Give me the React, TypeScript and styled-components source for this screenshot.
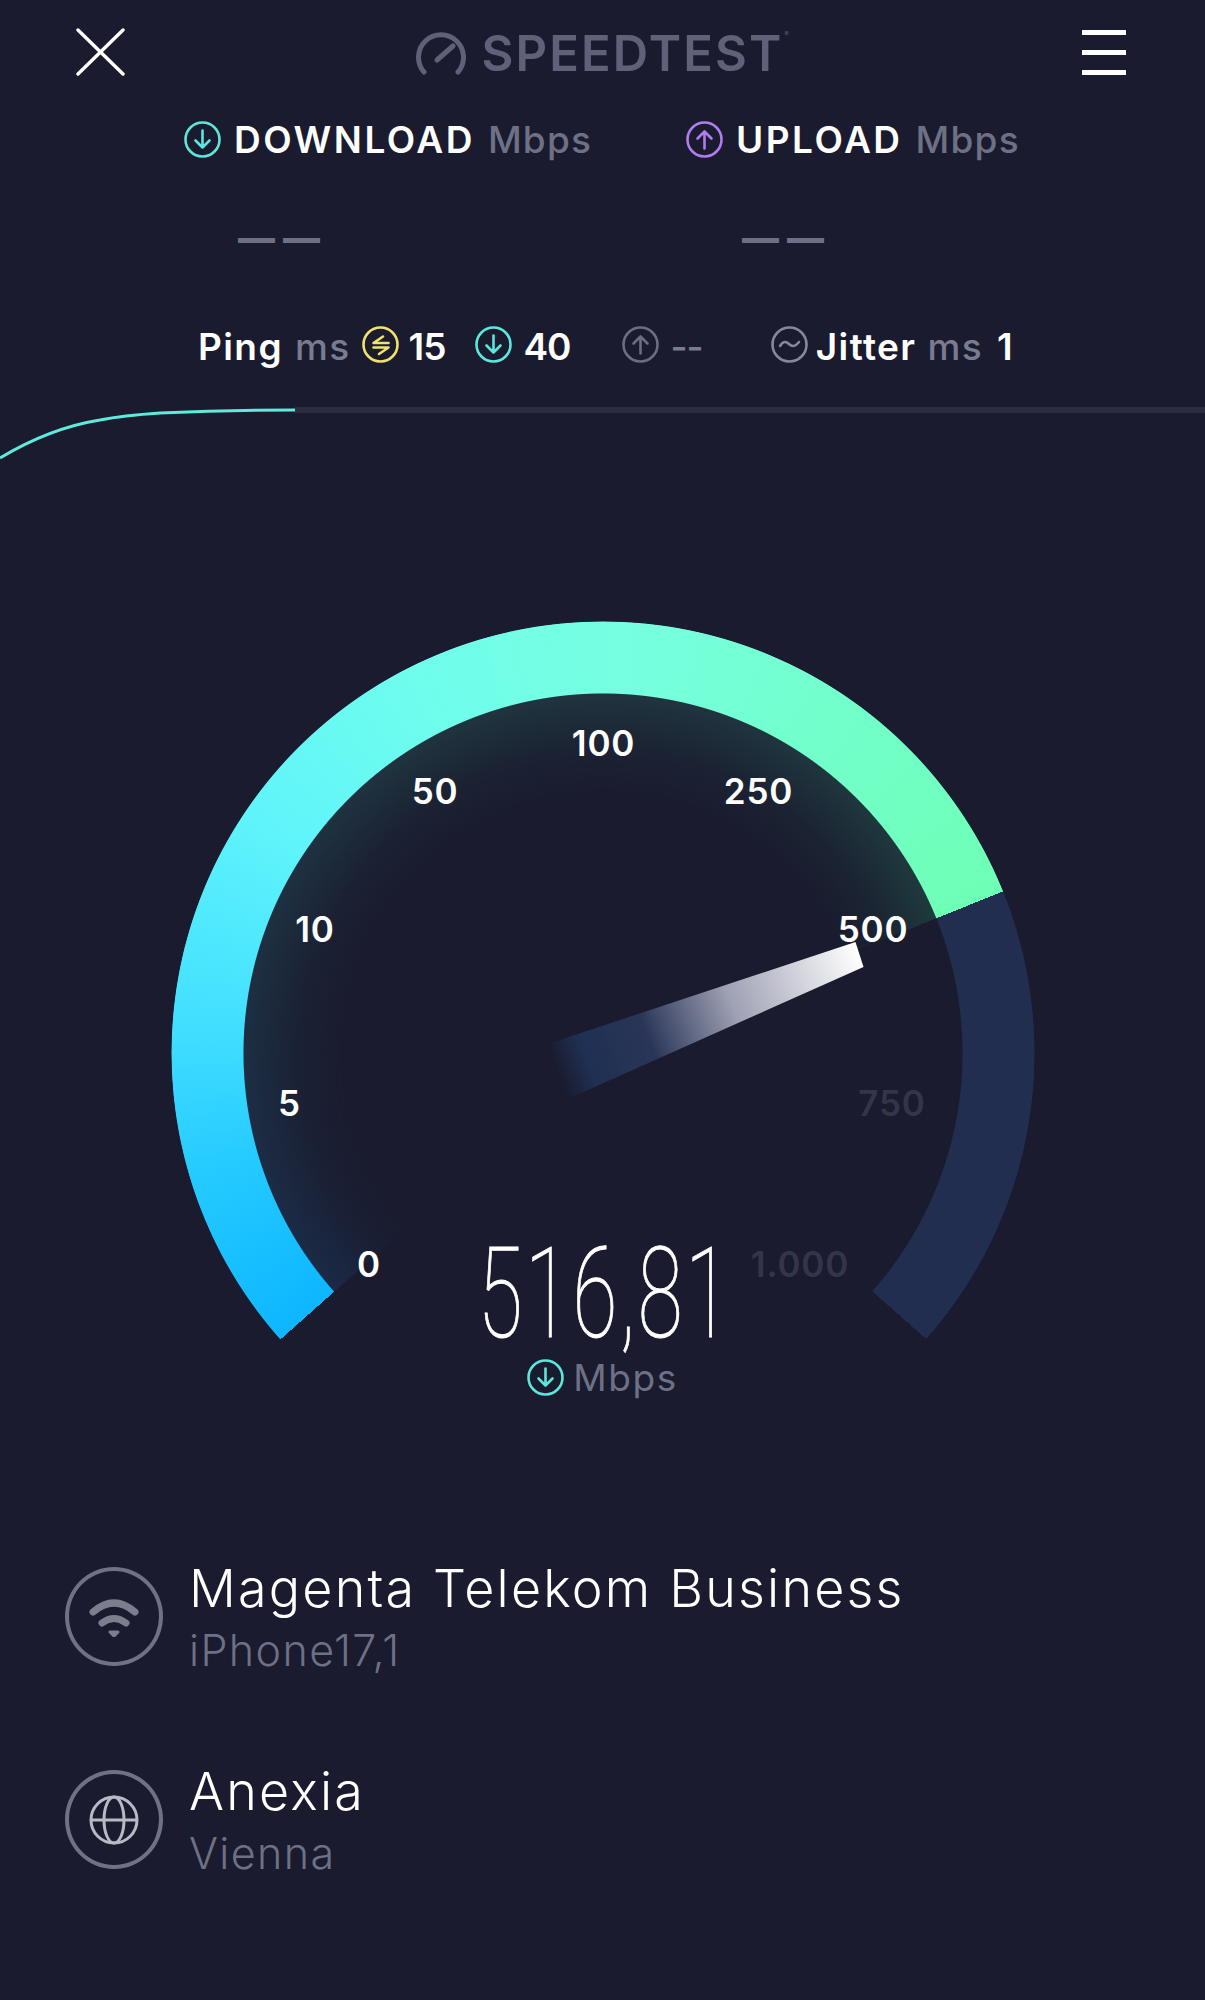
import { FC, ReactNode } from 'react'
import styled, { createGlobalStyle } from 'styled-components'

const GlobalStyle = createGlobalStyle`
  html, body {
    margin: 0;
    padding: 0;
    background: #1a1b2e;
  }
  * {
    box-sizing: border-box;
  }
`

const Page = styled.div`
  width: 1205px;
  min-height: 2000px;
  background: #1a1b2e;
  color: #fff;
  font-family: Inter, 'Liberation Sans', sans-serif;
  overflow: hidden;
`

const Header = styled.header`
  height: 104px;
  padding: 0 79px 0 76px;
  display: flex;
  align-items: center;
  justify-content: space-between;
`

const Logo = styled.div`
  display: flex;
  align-items: center;
  gap: 16px;
  color: #5f6178;
  font-size: 49px;
  font-weight: 600;
  letter-spacing: 2.1px;
  line-height: 1;
  margin: 2px 3px 0 0;
  & > sup {
    font-size: 6px;
    font-weight: 400;
    letter-spacing: 0;
    align-self: flex-start;
    margin: 2px 0 0 -15px;
  }
`

const Burger = styled.div`
  width: 44px;
  display: flex;
  flex-direction: column;
  gap: 15px;
  & > span {
    display: block;
    height: 5px;
    background: #fff;
  }
`

const MetricRow = styled.div`
  height: 72px;
  padding: 0 0 2px 184px;
  display: grid;
  grid-template-columns: 502px 502px;
  align-items: center;
`

const Metric = styled.div`
  display: flex;
  align-items: center;
  gap: 13px;
  font-size: 37px;
  font-weight: 600;
  letter-spacing: 2.5px;
  & > em {
    font-style: normal;
    font-weight: 500;
    color: #6e7085;
    letter-spacing: 1.2px;
  }
`

const DashRow = styled.div`
  height: 128px;
  padding: 0 0 5px 238px;
  display: grid;
  grid-template-columns: 504px 504px;
  align-items: center;
`

const Dashes = styled.div`
  font-size: 37px;
  line-height: 1;
  font-weight: 800;
  color: #6e7085;
  white-space: nowrap;
`

const PingRow = styled.div`
  height: 80px;
  padding: 4px 0 0 198px;
  display: flex;
  align-items: center;
  font-size: 37px;
  font-weight: 600;
`

const PingText = styled.span<{ $muted?: boolean; $gap?: number; $tight?: boolean }>`
  color: ${p => (p.$muted ? '#797b90' : '#fff')};
  font-weight: ${p => (p.$muted ? 500 : 600)};
  margin-left: ${p => p.$gap ?? 0}px;
  letter-spacing: ${p => (p.$tight ? '-1px' : '1.4px')};
  line-height: 1;
`

const IconSlot = styled.span<{ $gap: number }>`
  display: inline-flex;
  margin-left: ${p => p.$gap}px;
  margin-top: -4px;
`

const Trace = styled.svg`
  display: block;
  width: 1205px;
  height: 64px;
  margin-top: 16px;
`

const Gauge = styled.div`
  position: relative;
  width: 864px;
  height: 790px;
  margin: 157px auto 0;
`

const Dial = styled.div`
  position: absolute;
  top: 0;
  left: 0;
  width: 864px;
  height: 864px;
  border-radius: 50%;
`

const Ring = styled(Dial)`
  background: conic-gradient(
    from 228.4deg,
    #0db6ff 0deg,
    #25caff 25deg,
    #41deff 45deg,
    #5ff4fb 75deg,
    #6ffdec 105deg,
    #76ffe0 135deg,
    #72ffcc 165deg,
    #6effb6 199.6deg,
    #212e50 199.6deg,
    #212e50 263.1deg,
    transparent 263.1deg
  );
  mask: radial-gradient(circle closest-side, transparent 359px, #000 360px, #000 431px, transparent 432px);
`

const Glow = styled(Dial)`
  background: conic-gradient(
    from 228.4deg,
    #1b2a47 0deg,
    #1d3043 50deg,
    #20343f 100deg,
    #20343f 150deg,
    #1e3a3d 199.6deg,
    transparent 199.6deg
  );
  mask: radial-gradient(circle closest-side, transparent 255px, rgba(0, 0, 0, 0.32) 305px, #000 359px, transparent 360px);
`

const Needle = styled.svg`
  position: absolute;
  top: 0;
  left: 0;
`

const Tick = styled.span<{ $x: number; $y: number; $dim?: boolean }>`
  position: absolute;
  left: ${p => p.$x}px;
  top: ${p => p.$y}px;
  transform: translate(-50%, -50%);
  font-size: 35px;
  line-height: 1;
  font-weight: 600;
  letter-spacing: 0.8px;
  color: ${p => (p.$dim ? '#33354a' : '#fff')};
`

const Reading = styled.div`
  position: absolute;
  left: 0;
  right: 0;
  top: 618px;
  display: flex;
  flex-direction: column;
  align-items: center;
`

const Value = styled.div`
  font-family: Roboto, sans-serif;
  font-size: 126px;
  font-weight: 100;
  line-height: 110px;
  letter-spacing: 4px;
  -webkit-text-stroke: 1px #fff;
  transform: translateX(3px) scaleX(0.65);
  white-space: nowrap;
`

const Unit = styled.div`
  display: flex;
  align-items: center;
  gap: 9px;
  margin-top: 10px;
  font-size: 37px;
  font-weight: 400;
  line-height: 1;
  letter-spacing: 1.6px;
  color: #6e7085;
`

const Host = styled.div<{ $top: number }>`
  display: flex;
  gap: 26px;
  height: 100px;
  margin-top: ${p => p.$top}px;
  padding-left: 65px;
`

const HostBadge = styled.div`
  width: 98px;
  height: 99px;
  flex: none;
  border: 4px solid #6f7184;
  border-radius: 50%;
  display: flex;
  align-items: center;
  justify-content: center;
`

const HostName = styled.div`
  font-size: 52px;
  font-weight: 300;
  line-height: 56px;
  margin-top: -6px;
  letter-spacing: 2.2px;
`

const HostDetail = styled.div`
  font-size: 43px;
  font-weight: 300;
  line-height: 46px;
  margin-top: 10px;
  color: #6e7085;
  letter-spacing: 1.4px;
`

const RoundIcon: FC<{ color: string; children: ReactNode }> = ({ color, children }) => (
  <svg width="37" height="37" viewBox="0 0 37 37" fill="none" stroke={color} strokeWidth="2.6" strokeLinecap="round" strokeLinejoin="round">
    <circle cx="18.5" cy="18.5" r="17" />
    {children}
  </svg>
)

const DownArrow = () => (
  <RoundIcon color="#5ce6dc">
    <path d="M18.5 9.5v17M11.5 19.5l7 7 7-7" />
  </RoundIcon>
)

const ticks = [
  { label: '0', x: 198.5, y: 643 },
  { label: '5', x: 119, y: 481.5 },
  { label: '10', x: 144.5, y: 308 },
  { label: '50', x: 264.5, y: 170 },
  { label: '100', x: 433, y: 122 },
  { label: '250', x: 588, y: 170 },
  { label: '500', x: 702.5, y: 308 },
  { label: '750', x: 721.5, y: 481.5, dim: true },
  { label: '1.000', x: 629.5, y: 643, dim: true },
]

const App: FC = () => (
  <Page>
    <GlobalStyle />
    <Header>
      <svg width="49" height="48" viewBox="0 0 49 48" fill="none" stroke="#fff" strokeWidth="3.4" strokeLinecap="round">
        <path d="M2 2l45 44M47 2L2 46" />
      </svg>
      <Logo>
        <svg width="50" height="44" viewBox="0 0 50 44" fill="none" stroke="#5f6178" strokeWidth="5" strokeLinecap="round">
          <path d="M8 41A22.5 22.5 0 1 1 42 41" />
          <path d="M21 29l16-14" />
        </svg>
        SPEEDTEST
        <sup>®</sup>
      </Logo>
      <Burger>
        <span />
        <span />
        <span />
      </Burger>
    </Header>

    <MetricRow>
      <Metric>
        <DownArrow />
        DOWNLOAD <em>Mbps</em>
      </Metric>
      <Metric>
        <RoundIcon color="#b07cf0">
          <path d="M18.5 27.5v-17M11.5 17.5l7-7 7 7" />
        </RoundIcon>
        UPLOAD <em>Mbps</em>
      </Metric>
    </MetricRow>

    <DashRow>
      <Dashes>— —</Dashes>
      <Dashes>— —</Dashes>
    </DashRow>

    <PingRow>
      <PingText>Ping</PingText>
      <PingText $muted $gap={12}>ms</PingText>
      <IconSlot $gap={11}>
        <RoundIcon color="#f0e26c">
          <path d="M21 10.5L11.5 17h15M11.5 21.5h15L17 28" />
        </RoundIcon>
      </IconSlot>
      <PingText $tight $gap={10}>15</PingText>
      <IconSlot $gap={30}>
        <DownArrow />
      </IconSlot>
      <PingText $tight $gap={11}>40</PingText>
      <IconSlot $gap={51}>
        <RoundIcon color="#6b6d80">
          <path d="M18.5 27.5v-17M11.5 17.5l7-7 7 7" />
        </RoundIcon>
      </IconSlot>
      <PingText $muted $tight $gap={12}>--</PingText>
      <IconSlot $gap={68}>
        <RoundIcon color="#85879a">
          <path d="M9 20c3-5 6-5 9-2s6 3 10-2" />
        </RoundIcon>
      </IconSlot>
      <PingText $gap={8}>Jitter</PingText>
      <PingText $muted $gap={11}>ms</PingText>
      <PingText $gap={14}>1</PingText>
    </PingRow>

    <Trace viewBox="0 0 1205 64" fill="none">
      <rect x="295" y="7" width="910" height="6" fill="#2c2d40" />
      <path d="M0 58C40 34 75 24 100 20c15-3 30-5 60-7 45-2 90-3 135-3" stroke="#5feadd" strokeWidth="3" />
    </Trace>

    <Gauge>
      <Glow />
      <Ring />
      <Needle width="864" height="790" viewBox="170.5 621 864 790">
        <defs>
          <linearGradient id="needleFade" gradientUnits="userSpaceOnUse" x1="556" y1="1072" x2="859" y2="955">
            <stop offset="0" stopColor="#1f3052" stopOpacity="0" />
            <stop offset="0.1" stopColor="#1f3052" />
            <stop offset="0.3" stopColor="#2a3557" />
            <stop offset="0.58" stopColor="#9fa1b4" />
            <stop offset="1" stopColor="#ffffff" />
          </linearGradient>
        </defs>
        <polygon points="855,942 863,967 565,1100 550,1043" fill="url(#needleFade)" />
      </Needle>
      {ticks.map(t => (
        <Tick key={t.label} $x={t.x} $y={t.y} $dim={t.dim}>
          {t.label}
        </Tick>
      ))}
      <Reading>
        <Value>516,81</Value>
        <Unit>
          <DownArrow />
          Mbps
        </Unit>
      </Reading>
    </Gauge>

    <Host $top={156}>
      <HostBadge>
        <svg width="50" height="40" viewBox="0 -4 50 40" fill="none" stroke="#7c7d8d" strokeWidth="7" strokeLinecap="round" strokeLinejoin="round">
          <path d="M4 11Q25 -7 46 11" />
          <path d="M13 22Q25 13 37 22" />
          <path d="M21 31h8l-4 4z" fill="#7c7d8d" strokeWidth="3" />
        </svg>
      </HostBadge>
      <div>
        <HostName>Magenta Telekom Business</HostName>
        <HostDetail>iPhone17,1</HostDetail>
      </div>
    </Host>

    <Host $top={103}>
      <HostBadge>
        <svg width="50" height="50" viewBox="0 0 50 50" fill="none" stroke="#b8b9c6" strokeWidth="3">
          <circle cx="25" cy="25" r="23" />
          <ellipse cx="25" cy="25" rx="10" ry="23" />
          <path d="M2 25h46" />
        </svg>
      </HostBadge>
      <div>
        <HostName>Anexia</HostName>
        <HostDetail>Vienna</HostDetail>
      </div>
    </Host>
  </Page>
)

export default App
